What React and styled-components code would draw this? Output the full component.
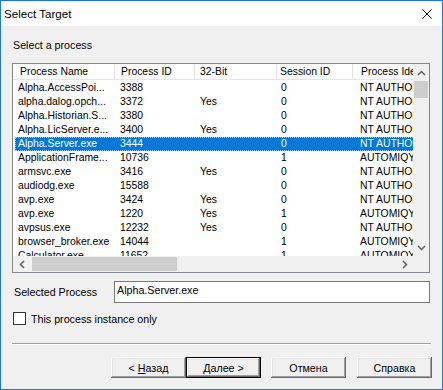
import React from 'react';
import styled, { createGlobalStyle } from 'styled-components';

const Global = createGlobalStyle`
  html, body { margin: 0; padding: 0; background: #fff; }
  body { font-family: "Liberation Sans", Arial, sans-serif; }
  * { box-sizing: border-box; }
`;

const Window = styled.div`
  width: 443px;
  height: 390px;
  border: 1px solid #1c7ad4;
  display: flex;
  flex-direction: column;
  background: #f0f0f0;
  font-family: "Liberation Sans", Arial, sans-serif;
  font-size: 10.7px;
  color: #000;
  overflow: hidden;
`;

const TitleBar = styled.div`
  height: 25px;
  flex-shrink: 0;
  background: #fff;
  display: flex;
  align-items: center;
  justify-content: space-between;
  padding: 0 10px 0 3px;
`;

const Title = styled.span`
  font-size: 11.6px;
  color: #000;
`;

const Body = styled.div`
  flex: 1;
  display: flex;
  flex-direction: column;
  padding: 13px 12px 0 11px;
`;

const SectionLabel = styled.div`
  height: 13px;
  line-height: 13px;
  padding-left: 1px;
`;

const ListBox = styled.div`
  margin-top: 11px;
  height: 210px;
  border: 1px solid #828790;
  background: #fff;
  display: grid;
  grid-template-columns: minmax(0, 1fr) 16px;
  grid-template-rows: minmax(0, 1fr) 16px;
`;

const Viewport = styled.div`
  overflow: hidden;
  min-width: 0;
  font-size: 10.4px;
`;

const COLS = [
  { w: 102, hp: 7, dp: 3 },
  { w: 80, hp: 6, dp: 5 },
  { w: 82, hp: 5, dp: 5 },
  { w: 76, hp: 3, dp: 4 },
  { w: 170, hp: 8, dp: 7 },
];

const HeaderRow = styled.div`
  display: grid;
  width: max-content;
  grid-template-columns: ${COLS.map((c) => c.w + 'px').join(' ')};
  height: 16px;
  border-bottom: 1px solid #e5e5e5;
`;

const HeaderCell = styled.div`
  padding-left: ${(p) => p.$pad}px;
  line-height: 15px;
  white-space: nowrap;
  overflow: hidden;
  border-right: 1px solid #e5e5e5;
`;

const Rows = styled.div`
  padding-top: 1px;
`;

const Row = styled.div`
  display: grid;
  width: max-content;
  margin-left: 2px;
  grid-template-columns: ${COLS.map((c, i) => (i === 0 ? c.w - 2 : c.w) + 'px').join(' ')};
  height: 14px;
  line-height: 14px;
  background: ${(p) => (p.$selected ? '#0078d7' : 'transparent')};
  color: ${(p) => (p.$selected ? '#fff' : '#000')};
  outline: ${(p) => (p.$selected ? '1px dotted #8fc3ee' : 'none')};
  outline-offset: -1px;
`;

const Cell = styled.div`
  padding-left: ${(p) => p.$pad}px;
  white-space: nowrap;
  overflow: hidden;
`;

const VScroll = styled.div`
  background: #f0f0f0;
  display: flex;
  flex-direction: column;
`;

const HScroll = styled.div`
  background: #f0f0f0;
  display: flex;
  flex-direction: row;
  min-width: 0;
`;

const Corner = styled.div`
  background: #f0f0f0;
`;

const ArrowBtn = styled.div`
  width: ${(p) => (p.$h ? '17px' : '16px')};
  height: ${(p) => (p.$h ? '16px' : '17px')};
  flex-shrink: 0;
  display: flex;
  align-items: center;
  justify-content: center;
`;

const VThumb = styled.div`
  height: 17px;
  margin: 0 1px;
  background: #cdcdcd;
  flex-shrink: 0;
`;

const HThumb = styled.div`
  width: 145px;
  margin: 1px 0 1px 2px;
  background: #cdcdcd;
  flex-shrink: 0;
`;

const Spacer = styled.div`
  flex: 1;
`;

const FieldRow = styled.div`
  display: flex;
  align-items: center;
  margin-top: 8px;
  height: 22px;
`;

const FieldLabel = styled.span`
  width: 102px;
  padding-left: 2px;
  flex-shrink: 0;
`;

const TextBox = styled.div`
  flex: 1;
  height: 22px;
  border: 1px solid #7a7a7a;
  background: #fff;
  padding: 2px 0 0 2px;
  line-height: 13px;
`;

const CheckRow = styled.label`
  display: flex;
  align-items: center;
  margin-top: 9px;
  height: 13px;
  gap: 5px;
`;

const CheckBox = styled.span`
  width: 13px;
  height: 13px;
  margin-left: 1px;
  border: 1px solid #333;
  background: #fff;
  flex-shrink: 0;
`;

const Separator = styled.div`
  margin: 18px -1px 0 0;
  height: 2px;
  border-top: 1px solid #a0a0a0;
  border-bottom: 1px solid #fff;
`;

const ButtonRow = styled.div`
  margin: 12px -2px 0 0;
  display: flex;
  justify-content: flex-end;
`;

const ButtonGroup = styled.div`
  display: flex;
  margin-left: ${(p) => p.$gap || 0}px;
`;

const Button = styled.button`
  width: 75px;
  height: 21px;
  padding: 0;
  border: none;
  background: #f0f0f0;
  font-family: "Liberation Sans", Arial, sans-serif;
  font-size: 10.7px;
  color: #000;
  box-shadow: ${(p) =>
    p.$default
      ? 'inset 0 0 0 1px #000, inset -2px -2px #696969, inset 2px 2px #fff, inset -3px -3px #a0a0a0, inset 3px 3px #e3e3e3'
      : 'inset -1px -1px #696969, inset 1px 1px #fff, inset -2px -2px #a0a0a0, inset 2px 2px #e3e3e3'};
  u { text-decoration: underline; text-underline-offset: 1px; }
`;

const Chevron = ({ dir }) => {
  const paths = {
    up: 'M1 5 L4.5 1.5 L8 5',
    down: 'M1 1 L4.5 4.5 L8 1',
    left: 'M5 1 L1.5 4.5 L5 8',
    right: 'M1 1 L4.5 4.5 L1 8',
  };
  const vert = dir === 'up' || dir === 'down';
  return (
    <svg width={vert ? 9 : 6} height={vert ? 6 : 9} viewBox={vert ? '0 0 9 6' : '0 0 6 9'}>
      <path d={paths[dir]} stroke="#606060" strokeWidth="1.5" fill="none" />
    </svg>
  );
};

const HEAD = ['Process Name', 'Process ID', '32-Bit', 'Session ID', 'Process Identity'];

const NT = 'NT AUTHORITY\\SYSTEM';
const AU = 'AUTOMIQY\\user';

const DATA = [
  ['Alpha.AccessPoi...', '3388', '', '0', NT],
  ['alpha.dalog.opch...', '3372', 'Yes', '0', NT],
  ['Alpha.Historian.S...', '3380', '', '0', NT],
  ['Alpha.LicServer.e...', '3400', 'Yes', '0', NT],
  ['Alpha.Server.exe', '3444', '', '0', NT],
  ['ApplicationFrame...', '10736', '', '1', AU],
  ['armsvc.exe', '3416', 'Yes', '0', NT],
  ['audiodg.exe', '15588', '', '0', NT],
  ['avp.exe', '3424', 'Yes', '0', NT],
  ['avp.exe', '1220', 'Yes', '1', AU],
  ['avpsus.exe', '12232', 'Yes', '0', NT],
  ['browser_broker.exe', '14044', '', '1', AU],
  ['Calculator.exe', '11652', '', '1', AU],
];

export default function App() {
  return (
    <>
      <Global />
      <Window>
        <TitleBar>
          <Title>Select Target</Title>
          <svg width="10" height="10" viewBox="0 0 10 10">
            <path d="M0.5 0.5 L9.5 9.5 M9.5 0.5 L0.5 9.5" stroke="#111" strokeWidth="1" />
          </svg>
        </TitleBar>
        <Body>
          <SectionLabel>Select a process</SectionLabel>
          <ListBox>
            <Viewport>
              <HeaderRow>
                {HEAD.map((h, i) => (
                  <HeaderCell key={h} $pad={COLS[i].hp}>{h}</HeaderCell>
                ))}
              </HeaderRow>
              <Rows>
                {DATA.map((r, ri) => (
                  <Row key={ri} $selected={ri === 4}>
                    {r.map((c, ci) => (
                      <Cell key={ci} $pad={COLS[ci].dp}>{c}</Cell>
                    ))}
                  </Row>
                ))}
              </Rows>
            </Viewport>
            <VScroll>
              <ArrowBtn><Chevron dir="up" /></ArrowBtn>
              <VThumb />
              <Spacer />
              <ArrowBtn><Chevron dir="down" /></ArrowBtn>
            </VScroll>
            <HScroll>
              <ArrowBtn $h><Chevron dir="left" /></ArrowBtn>
              <HThumb />
              <Spacer />
              <ArrowBtn $h><Chevron dir="right" /></ArrowBtn>
            </HScroll>
            <Corner />
          </ListBox>
          <FieldRow>
            <FieldLabel>Selected Process</FieldLabel>
            <TextBox>Alpha.Server.exe</TextBox>
          </FieldRow>
          <CheckRow>
            <CheckBox />
            <span>This process instance only</span>
          </CheckRow>
          <Separator />
          <ButtonRow>
            <ButtonGroup>
              <Button>&lt; <u>Н</u>азад</Button>
              <Button $default><u>Д</u>алее &gt;</Button>
            </ButtonGroup>
            <ButtonGroup $gap={10}>
              <Button>Отмена</Button>
            </ButtonGroup>
            <ButtonGroup $gap={11}>
              <Button>Справка</Button>
            </ButtonGroup>
          </ButtonRow>
        </Body>
      </Window>
    </>
  );
}
